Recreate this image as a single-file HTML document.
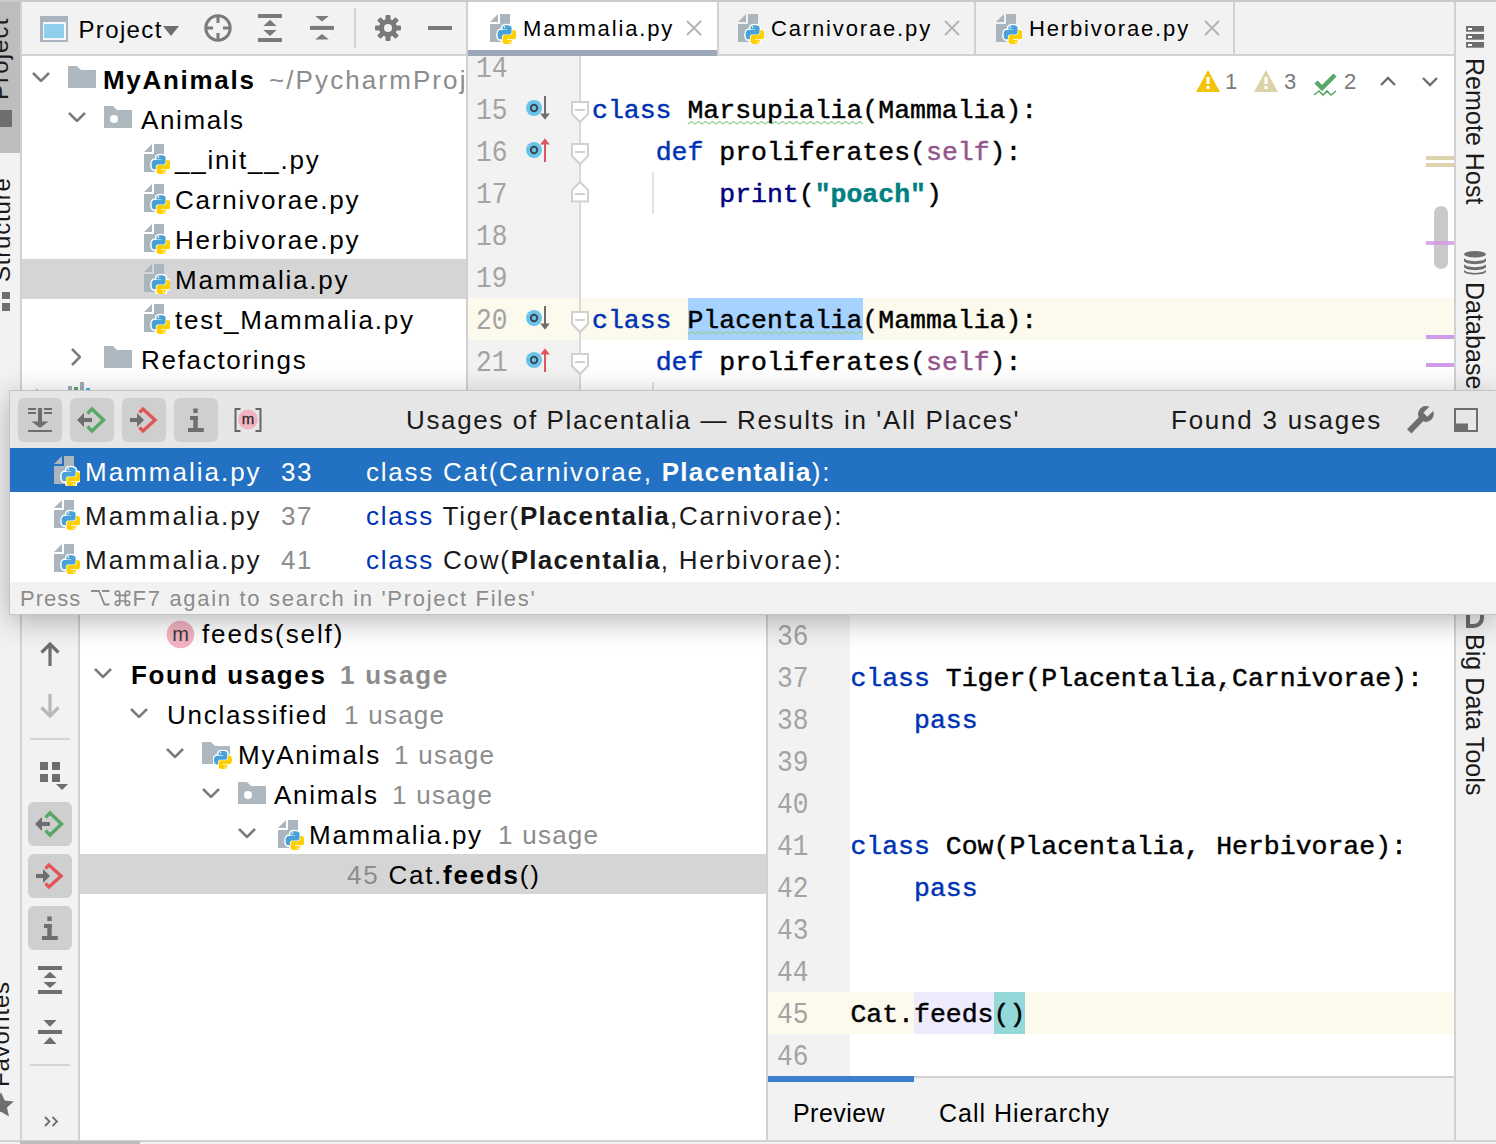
<!DOCTYPE html>
<html><head><meta charset="utf-8">
<style>
*{margin:0;padding:0;box-sizing:border-box}
html,body{width:1496px;height:1144px;overflow:hidden}
body{position:relative;background:#f2f2f2;font-family:"Liberation Sans",sans-serif;color:#000}
.a{position:absolute}
.t{position:absolute;white-space:pre;font-size:26px;letter-spacing:1.6px;line-height:40px;height:40px}
.c{position:absolute;white-space:pre;font-family:"Liberation Mono",monospace;font-size:26.5px;line-height:42px;height:42px;-webkit-text-stroke:0.45px currentColor}
.ln{position:absolute;white-space:pre;font-family:"Liberation Mono",monospace;font-size:28.7px;line-height:42px;height:42px;color:#a3a3a3;text-align:right;transform:scaleX(0.914);transform-origin:100% 50%}
.g{color:#8c8c8c}
.kw{color:#0033b3}
.bi{color:#000080}
.st{color:#008080;font-weight:bold}
.sf{color:#94558d}
svg{position:absolute;overflow:visible}
</style></head>
<body>
<svg width="0" height="0" style="position:absolute"><defs>
<symbol id="py" viewBox="0 0 26 30"><path d="M0 8L8 0V8Z" fill="#aab5be"/><path d="M10 0H20V28H0V10H10Z" fill="#aab5be"/><g transform="translate(7.6 11.2) scale(0.19)"><path d="M49.5 0C24 0 25.6 11 25.6 11L25.7 22.4H50V25.8H16C16 25.8 0 24 0 49.7C0 75.4 14.1 74.5 14.1 74.5H22.5V62.6C22.5 62.6 22 48.5 36.3 48.5H60.2C60.2 48.5 73.6 48.7 73.6 35.5V13.7C73.6 13.7 75.6 0 49.5 0Z" fill="#fff" stroke="#fff" stroke-width="16" stroke-linejoin="round"/><path d="M50.2 100C75.7 100 74.1 89 74.1 89L74 77.6H49.7V74.2H83.7C83.7 74.2 99.7 76 99.7 50.3C99.7 24.6 85.6 25.5 85.6 25.5H77.2V37.4C77.2 37.4 77.7 51.5 63.4 51.5H39.5C39.5 51.5 26.1 51.3 26.1 64.5V86.3C26.1 86.3 24.1 100 50.2 100Z" fill="#fff" stroke="#fff" stroke-width="16" stroke-linejoin="round"/><path d="M49.5 0C24 0 25.6 11 25.6 11L25.7 22.4H50V25.8H16C16 25.8 0 24 0 49.7C0 75.4 14.1 74.5 14.1 74.5H22.5V62.6C22.5 62.6 22 48.5 36.3 48.5H60.2C60.2 48.5 73.6 48.7 73.6 35.5V13.7C73.6 13.7 75.6 0 49.5 0Z" fill="#48a2d8"/><path d="M50.2 100C75.7 100 74.1 89 74.1 89L74 77.6H49.7V74.2H83.7C83.7 74.2 99.7 76 99.7 50.3C99.7 24.6 85.6 25.5 85.6 25.5H77.2V37.4C77.2 37.4 77.7 51.5 63.4 51.5H39.5C39.5 51.5 26.1 51.3 26.1 64.5V86.3C26.1 86.3 24.1 100 50.2 100Z" fill="#ffd000"/><circle cx="36" cy="10" r="4.5" fill="#fff"/><circle cx="64" cy="90" r="4.5" fill="#fff"/></g></symbol>
<symbol id="pylogo" viewBox="0 0 20 20"><g transform="translate(1 1) scale(0.18)"><path d="M49.5 0C24 0 25.6 11 25.6 11L25.7 22.4H50V25.8H16C16 25.8 0 24 0 49.7C0 75.4 14.1 74.5 14.1 74.5H22.5V62.6C22.5 62.6 22 48.5 36.3 48.5H60.2C60.2 48.5 73.6 48.7 73.6 35.5V13.7C73.6 13.7 75.6 0 49.5 0Z" fill="#fff" stroke="#fff" stroke-width="16" stroke-linejoin="round"/><path d="M50.2 100C75.7 100 74.1 89 74.1 89L74 77.6H49.7V74.2H83.7C83.7 74.2 99.7 76 99.7 50.3C99.7 24.6 85.6 25.5 85.6 25.5H77.2V37.4C77.2 37.4 77.7 51.5 63.4 51.5H39.5C39.5 51.5 26.1 51.3 26.1 64.5V86.3C26.1 86.3 24.1 100 50.2 100Z" fill="#fff" stroke="#fff" stroke-width="16" stroke-linejoin="round"/><path d="M49.5 0C24 0 25.6 11 25.6 11L25.7 22.4H50V25.8H16C16 25.8 0 24 0 49.7C0 75.4 14.1 74.5 14.1 74.5H22.5V62.6C22.5 62.6 22 48.5 36.3 48.5H60.2C60.2 48.5 73.6 48.7 73.6 35.5V13.7C73.6 13.7 75.6 0 49.5 0Z" fill="#48a2d8"/><path d="M50.2 100C75.7 100 74.1 89 74.1 89L74 77.6H49.7V74.2H83.7C83.7 74.2 99.7 76 99.7 50.3C99.7 24.6 85.6 25.5 85.6 25.5H77.2V37.4C77.2 37.4 77.7 51.5 63.4 51.5H39.5C39.5 51.5 26.1 51.3 26.1 64.5V86.3C26.1 86.3 24.1 100 50.2 100Z" fill="#ffd000"/><circle cx="36" cy="10" r="4.5" fill="#fff"/><circle cx="64" cy="90" r="4.5" fill="#fff"/></g></symbol>
<symbol id="fold" viewBox="0 0 28 22"><path d="M0 0H9L13 4H28V22H0Z" fill="#adb8c1"/></symbol>
<symbol id="modf" viewBox="0 0 28 22"><path d="M0 0H9L13 4H28V22H0Z" fill="#adb8c1"/><circle cx="10" cy="13" r="4" fill="#fff"/></symbol>
<symbol id="chd" viewBox="0 0 18 10"><path d="M1 1L9 9L17 1" fill="none" stroke="#7b7b7b" stroke-width="2.5"/></symbol>
<symbol id="chr" viewBox="0 0 10 18"><path d="M1 1L9 9L1 17" fill="none" stroke="#7b7b7b" stroke-width="2.5"/></symbol>
</defs></svg>
<div class="a" style="left:0;top:0;width:1496px;height:1144px;clip-path:inset(0px 1476px 0px 0px)">
<div class="a" style="left:0px;top:0px;width:20px;height:1144px;background:#f2f2f2;"></div>
<div class="a" style="left:0px;top:0px;width:20px;height:153px;background:#bdbdbd;"></div>
<div class="a" style="left:-12px;top:99.5px;width:200px;height:24px;font-size:24px;line-height:24px;letter-spacing:1.1px;white-space:pre;transform:rotate(-90deg);transform-origin:0 0;color:#1a1a1a">Project</div>
<div class="a" style="left:0px;top:110px;width:12px;height:17px;background:#6e6e6e;"></div>
<div class="a" style="left:-10.5px;top:282px;width:200px;height:24px;font-size:24px;line-height:24px;letter-spacing:0.8px;white-space:pre;transform:rotate(-90deg);transform-origin:0 0;color:#1a1a1a">Structure</div>
<div class="a" style="left:2px;top:292px;width:8px;height:7px;background:#6e6e6e;"></div>
<div class="a" style="left:2px;top:303px;width:8px;height:8px;background:#6e6e6e;"></div>
<div class="a" style="left:-11.5px;top:1086.5px;width:200px;height:24px;font-size:24px;line-height:24px;letter-spacing:0.8px;white-space:pre;transform:rotate(-90deg);transform-origin:0 0;color:#1a1a1a">Favorites</div>
<svg style="left:-13px;top:1091px" width="28" height="28" viewBox="0 0 24 24"><path d="M12 1l3.2 7.2 7.8.7-5.9 5.2 1.8 7.7L12 17.8 5.1 21.8l1.8-7.7L1 8.9l7.8-.7z" fill="#6e6e6e"/></svg>
</div>
<div class="a" style="left:20px;top:0px;width:2px;height:1144px;background:#d1d1d1;"></div>
<div class="a" style="left:0;top:0;width:1496px;height:1144px;clip-path:inset(2px 1030px 753px 22px)">
<div class="a" style="left:22px;top:2px;width:444px;height:389px;background:#fff;"></div>
<div class="a" style="left:22px;top:2px;width:444px;height:52px;background:#f2f2f2;"></div>
<div class="a" style="left:22px;top:54px;width:444px;height:2px;background:#d1d1d1;"></div>
<div class="a" style="left:40px;top:16px;width:28px;height:26px;background:#aab4be;"></div>
<div class="a" style="left:42.5px;top:22px;width:23px;height:18px;background:#f4f6f8;"></div>
<div class="a" style="left:44px;top:23.5px;width:20px;height:14.5px;background:#8fcfec;"></div>
<div class="t" style="left:78.5px;top:10px;font-size:24px;letter-spacing:1.35px">Project</div>
<svg style="left:163px;top:26px" width="16" height="10" viewBox="0 0 16 10"><path d="M0 0H16L8 10Z" fill="#6e6e6e"/></svg>
<svg style="left:204px;top:14px" width="28" height="28" viewBox="0 0 28 28"><circle cx="14" cy="14" r="12.2" fill="none" stroke="#7a7a7a" stroke-width="3"/><path d="M14 2v7M14 19v7M2 14h7M19 14h7" stroke="#7a7a7a" stroke-width="3"/></svg>
<svg style="left:258px;top:14px" width="24" height="28" viewBox="0 0 24 28"><path d="M0 2h24M0 26h24" stroke="#7a7a7a" stroke-width="4"/><path d="M12 5.8L18.6 11.9H5.4ZM12 22L18.6 15.9H5.4Z" fill="#7a7a7a"/></svg>
<svg style="left:310px;top:16px" width="24" height="24" viewBox="0 0 24 24"><path d="M0 11.9h24" stroke="#7a7a7a" stroke-width="4"/><path d="M12 5.6L18.8 0H5.2ZM12 18L18.8 23.6H5.2Z" fill="#7a7a7a"/></svg>
<div class="a" style="left:354px;top:8px;width:2px;height:40px;background:#d4d4d4;"></div>
<svg style="left:375px;top:15px" width="26" height="26" viewBox="0 0 26 26"><g fill="#7a7a7a"><circle cx="13" cy="13" r="9"/><rect x="10.5" y="0" width="5" height="26" rx="1"/><rect x="10.5" y="0" width="5" height="26" rx="1" transform="rotate(45 13 13)"/><rect x="10.5" y="0" width="5" height="26" rx="1" transform="rotate(90 13 13)"/><rect x="10.5" y="0" width="5" height="26" rx="1" transform="rotate(135 13 13)"/></g><circle cx="13" cy="13" r="4" fill="#f2f2f2"/></svg>
<div class="a" style="left:428px;top:26px;width:24px;height:4px;background:#7a7a7a;"></div>
<div class="a" style="left:22px;top:259px;width:444px;height:40px;background:#d5d5d5;"></div>
<svg style="left:32px;top:71.5px" width="18" height="10"><use href="#chd"/></svg>
<svg style="left:68px;top:66px" width="28" height="22"><use href="#fold"/></svg>
<div class="t" style="left:103px;top:59.5px;font-weight:bold;letter-spacing:1.7px">MyAnimals</div>
<div class="t" style="left:269px;top:59.5px;color:#8c8c8c;letter-spacing:2.1px">~/PycharmProjects/MyAnimals</div>
<svg style="left:68px;top:111.5px" width="18" height="10"><use href="#chd"/></svg>
<svg style="left:104px;top:106px" width="28" height="22"><use href="#modf"/></svg>
<div class="t" style="left:141px;top:99.5px;">Animals</div>
<svg style="left:144px;top:144px" width="26" height="30"><use href="#py"/></svg>
<div class="t" style="left:175px;top:139.5px;letter-spacing:1.8px">__init__.py</div>
<svg style="left:144px;top:184px" width="26" height="30"><use href="#py"/></svg>
<div class="t" style="left:175px;top:179.5px;letter-spacing:1.8px">Carnivorae.py</div>
<svg style="left:144px;top:224px" width="26" height="30"><use href="#py"/></svg>
<div class="t" style="left:175px;top:219.5px;letter-spacing:1.8px">Herbivorae.py</div>
<svg style="left:144px;top:264px" width="26" height="30"><use href="#py"/></svg>
<div class="t" style="left:175px;top:259.5px;letter-spacing:1.8px">Mammalia.py</div>
<svg style="left:144px;top:304px" width="26" height="30"><use href="#py"/></svg>
<div class="t" style="left:175px;top:299.5px;letter-spacing:1.8px">test_Mammalia.py</div>
<svg style="left:71px;top:348px" width="10" height="18"><use href="#chr"/></svg>
<svg style="left:104px;top:346px" width="28" height="22"><use href="#fold"/></svg>
<div class="t" style="left:141px;top:339.5px;letter-spacing:1.7px">Refactorings</div>
<svg style="left:35px;top:389px" width="10" height="18"><use href="#chr"/></svg>
<div class="a" style="left:68px;top:386px;width:4px;height:20px;background:#a4aeb8;"></div>
<div class="a" style="left:74px;top:387px;width:4px;height:19px;background:#59a869;"></div>
<div class="a" style="left:80px;top:382px;width:4px;height:24px;background:#a4aeb8;"></div>
<div class="a" style="left:86px;top:388px;width:4px;height:18px;background:#40b6e0;"></div>
<div class="t" style="left:105px;top:379.5px;">External Libraries</div>
</div>
<div class="a" style="left:466px;top:2px;width:2px;height:389px;background:#d1d1d1;"></div>
<div class="a" style="left:0;top:0;width:1496px;height:1144px;clip-path:inset(2px 42px 753px 468px)">
<div class="a" style="left:468px;top:2px;width:986px;height:389px;background:#fff;"></div>
<div class="a" style="left:468px;top:2px;width:986px;height:52px;background:#f2f2f2;"></div>
<div class="a" style="left:468px;top:54px;width:986px;height:2px;background:#d1d1d1;"></div>
<div class="a" style="left:468px;top:2px;width:249px;height:48px;background:#fff;"></div>
<div class="a" style="left:468px;top:50px;width:249px;height:6px;background:#9ca7b8;"></div>
<div class="a" style="left:717px;top:2px;width:2px;height:52px;background:#d1d1d1;"></div>
<div class="a" style="left:974px;top:2px;width:2px;height:52px;background:#d1d1d1;"></div>
<div class="a" style="left:1233px;top:2px;width:2px;height:52px;background:#d1d1d1;"></div>
<svg style="left:490px;top:14px" width="26" height="30"><use href="#py"/></svg>
<div class="a" style="left:523px;top:3px;height:52px;line-height:52px;font-size:22px;letter-spacing:1.85px;white-space:pre">Mammalia.py</div>
<svg style="left:686px;top:20px" width="16" height="16" viewBox="0 0 16 16"><path d="M1 1L15 15M15 1L1 15" stroke="#b4b4b4" stroke-width="2"/></svg>
<svg style="left:738px;top:14px" width="26" height="30"><use href="#py"/></svg>
<div class="a" style="left:771px;top:3px;height:52px;line-height:52px;font-size:22px;letter-spacing:1.85px;white-space:pre">Carnivorae.py</div>
<svg style="left:944px;top:20px" width="16" height="16" viewBox="0 0 16 16"><path d="M1 1L15 15M15 1L1 15" stroke="#b4b4b4" stroke-width="2"/></svg>
<svg style="left:996px;top:14px" width="26" height="30"><use href="#py"/></svg>
<div class="a" style="left:1029px;top:3px;height:52px;line-height:52px;font-size:22px;letter-spacing:1.85px;white-space:pre">Herbivorae.py</div>
<svg style="left:1204px;top:20px" width="16" height="16" viewBox="0 0 16 16"><path d="M1 1L15 15M15 1L1 15" stroke="#b4b4b4" stroke-width="2"/></svg>
<div class="a" style="left:468px;top:56px;width:112px;height:335px;background:#f2f2f2;"></div>
<div class="a" style="left:468px;top:298px;width:986px;height:42px;background:#fcfaed;"></div>
<div class="a" style="left:579px;top:56px;width:2px;height:335px;background:#d9d9d9;"></div>
<div class="ln" style="left:468px;width:39.5px;top:48.5px">14</div>
<div class="ln" style="left:468px;width:39.5px;top:90.5px">15</div>
<div class="ln" style="left:468px;width:39.5px;top:132.5px">16</div>
<div class="ln" style="left:468px;width:39.5px;top:174.5px">17</div>
<div class="ln" style="left:468px;width:39.5px;top:216.5px">18</div>
<div class="ln" style="left:468px;width:39.5px;top:258.5px">19</div>
<div class="ln" style="left:468px;width:39.5px;top:300.5px">20</div>
<div class="ln" style="left:468px;width:39.5px;top:342.5px">21</div>
<div class="ln" style="left:468px;width:39.5px;top:384.5px">22</div>
<svg style="left:526px;top:108px" width="1" height="1"><circle cx="8" cy="0" r="8" fill="#6ac3e8"/><circle cx="8" cy="0" r="3.2" fill="none" stroke="#3b4a52" stroke-width="2"/><path d="M19 -12V6" stroke="#6e6e6e" stroke-width="2"/><path d="M14.2 5.5L19 11.8L23.8 5.5Z" fill="#6e6e6e"/></svg>
<svg style="left:526px;top:150px" width="1" height="1"><circle cx="8" cy="0" r="8" fill="#6ac3e8"/><circle cx="8" cy="0" r="3.2" fill="none" stroke="#3b4a52" stroke-width="2"/><path d="M19 12V-6" stroke="#db5860" stroke-width="2"/><path d="M14.2 -5.5L19 -11.8L23.8 -5.5Z" fill="#db5860"/></svg>
<svg style="left:526px;top:318px" width="1" height="1"><circle cx="8" cy="0" r="8" fill="#6ac3e8"/><circle cx="8" cy="0" r="3.2" fill="none" stroke="#3b4a52" stroke-width="2"/><path d="M19 -12V6" stroke="#6e6e6e" stroke-width="2"/><path d="M14.2 5.5L19 11.8L23.8 5.5Z" fill="#6e6e6e"/></svg>
<svg style="left:526px;top:360px" width="1" height="1"><circle cx="8" cy="0" r="8" fill="#6ac3e8"/><circle cx="8" cy="0" r="3.2" fill="none" stroke="#3b4a52" stroke-width="2"/><path d="M19 12V-6" stroke="#db5860" stroke-width="2"/><path d="M14.2 -5.5L19 -11.8L23.8 -5.5Z" fill="#db5860"/></svg>
<svg style="left:580px;top:109px" width="1" height="1"><path d="M-8 -7H8V5L0 13L-8 5Z" fill="#fff" stroke="#d0d0d0" stroke-width="2"/><path d="M-5 1H5" stroke="#d0d0d0" stroke-width="2"/></svg>
<svg style="left:580px;top:151px" width="1" height="1"><path d="M-8 -7H8V5L0 13L-8 5Z" fill="#fff" stroke="#d0d0d0" stroke-width="2"/><path d="M-5 1H5" stroke="#d0d0d0" stroke-width="2"/></svg>
<svg style="left:580px;top:193px" width="1" height="1"><path d="M-8 8.4H8V-3L0 -11L-8 -3Z" fill="#fff" stroke="#d0d0d0" stroke-width="2"/><path d="M-5 1H5" stroke="#d0d0d0" stroke-width="2"/></svg>
<svg style="left:580px;top:319px" width="1" height="1"><path d="M-8 -7H8V5L0 13L-8 5Z" fill="#fff" stroke="#d0d0d0" stroke-width="2"/><path d="M-5 1H5" stroke="#d0d0d0" stroke-width="2"/></svg>
<svg style="left:580px;top:361px" width="1" height="1"><path d="M-8 -7H8V5L0 13L-8 5Z" fill="#fff" stroke="#d0d0d0" stroke-width="2"/><path d="M-5 1H5" stroke="#d0d0d0" stroke-width="2"/></svg>
<svg style="left:580px;top:403px" width="1" height="1"><path d="M-8 8.4H8V-3L0 -11L-8 -3Z" fill="#fff" stroke="#d0d0d0" stroke-width="2"/><path d="M-5 1H5" stroke="#d0d0d0" stroke-width="2"/></svg>
<div class="a" style="left:652px;top:172px;width:2px;height:42px;background:#e3e3e3;"></div>
<div class="a" style="left:652px;top:382px;width:2px;height:20px;background:#e3e3e3;"></div>
<div class="a" style="left:687.9px;top:298px;width:174.9px;height:42px;background:#a6d2ff;"></div>
<svg style="left:687.9px;top:121px" width="174" height="4" viewBox="0 0 174 4"><path d="M0 3 L3.5 0.5 L7.0 3 L10.5 0.5 L14.0 3 L17.5 0.5 L21.0 3 L24.5 0.5 L28.0 3 L31.5 0.5 L35.0 3 L38.5 0.5 L42.0 3 L45.5 0.5 L49.0 3 L52.5 0.5 L56.0 3 L59.5 0.5 L63.0 3 L66.5 0.5 L70.0 3 L73.5 0.5 L77.0 3 L80.5 0.5 L84.0 3 L87.5 0.5 L91.0 3 L94.5 0.5 L98.0 3 L101.5 0.5 L105.0 3 L108.5 0.5 L112.0 3 L115.5 0.5 L119.0 3 L122.5 0.5 L126.0 3 L129.5 0.5 L133.0 3 L136.5 0.5 L140.0 3 L143.5 0.5 L147.0 3 L150.5 0.5 L154.0 3 L157.5 0.5 L161.0 3 L164.5 0.5 L168.0 3 L171.5 0.5 L175.0 3" fill="none" stroke="#9dcf9d" stroke-width="1.3"/></svg>
<svg style="left:687.9px;top:331px" width="174" height="4" viewBox="0 0 174 4"><path d="M0 3 L3.5 0.5 L7.0 3 L10.5 0.5 L14.0 3 L17.5 0.5 L21.0 3 L24.5 0.5 L28.0 3 L31.5 0.5 L35.0 3 L38.5 0.5 L42.0 3 L45.5 0.5 L49.0 3 L52.5 0.5 L56.0 3 L59.5 0.5 L63.0 3 L66.5 0.5 L70.0 3 L73.5 0.5 L77.0 3 L80.5 0.5 L84.0 3 L87.5 0.5 L91.0 3 L94.5 0.5 L98.0 3 L101.5 0.5 L105.0 3 L108.5 0.5 L112.0 3 L115.5 0.5 L119.0 3 L122.5 0.5 L126.0 3 L129.5 0.5 L133.0 3 L136.5 0.5 L140.0 3 L143.5 0.5 L147.0 3 L150.5 0.5 L154.0 3 L157.5 0.5 L161.0 3 L164.5 0.5 L168.0 3 L171.5 0.5 L175.0 3" fill="none" stroke="#9dcf9d" stroke-width="1.3"/></svg>
<div class="c" style="left:592.0px;top:90px;"><span class="kw">class</span> Marsupialia(Mammalia):</div>
<div class="c" style="left:592.0px;top:132px;">    <span class="kw">def</span> proliferates(<span class="sf">self</span>):</div>
<div class="c" style="left:592.0px;top:174px;">        <span class="bi">print</span>(<span class="st">"poach"</span>)</div>
<div class="c" style="left:592.0px;top:300px;"><span class="kw">class</span> Placentalia(Mammalia):</div>
<div class="c" style="left:592.0px;top:342px;">    <span class="kw">def</span> proliferates(<span class="sf">self</span>):</div>
<div class="c" style="left:592.0px;top:384px;">        <span class="bi">print</span>(<span class="st">"placenta"</span>)</div>
<svg style="left:1196px;top:70px" width="24" height="22" viewBox="0 0 24 22"><path d="M12 0L24 22H0Z" fill="#f2c40e"/><rect x="10.5" y="7" width="3" height="7" fill="#fff"/><rect x="10.5" y="16" width="3" height="3" fill="#fff"/></svg>
<div class="a" style="left:1225px;top:62px;height:40px;line-height:40px;font-size:22px;color:#7a7a7a">1</div>
<svg style="left:1254px;top:70px" width="24" height="22" viewBox="0 0 24 22"><path d="M12 0L24 22H0Z" fill="#dcd3aa"/><rect x="10.5" y="7" width="3" height="7" fill="#fff"/><rect x="10.5" y="16" width="3" height="3" fill="#fff"/></svg>
<div class="a" style="left:1284px;top:62px;height:40px;line-height:40px;font-size:22px;color:#7a7a7a">3</div>
<svg style="left:1314px;top:72px" width="24" height="24" viewBox="0 0 24 24"><path d="M2 10L8 16L21 3" fill="none" stroke="#59a869" stroke-width="4.5"/><path d="M0 23L5 19L9 23L13 19L17 23L22 19" fill="none" stroke="#59a869" stroke-width="1.6"/></svg>
<div class="a" style="left:1344px;top:62px;height:40px;line-height:40px;font-size:22px;color:#7a7a7a">2</div>
<svg style="left:1380px;top:76px" width="16" height="10" viewBox="0 0 16 10"><path d="M1 9L8 2L15 9" fill="none" stroke="#6e6e6e" stroke-width="2.4"/></svg>
<svg style="left:1422px;top:77px" width="16" height="10" viewBox="0 0 16 10"><path d="M1 1L8 8L15 1" fill="none" stroke="#6e6e6e" stroke-width="2.4"/></svg>
<div class="a" style="left:1426px;top:156px;width:28px;height:4px;background:#ddd3ae;"></div>
<div class="a" style="left:1426px;top:163px;width:28px;height:4px;background:#ddd3ae;"></div>
<div class="a" style="left:1434px;top:206px;width:14px;height:63px;background:#c9c9c9;border-radius:7px"></div>
<div class="a" style="left:1426px;top:241px;width:28px;height:4px;background:#cf9bea;opacity:0.85"></div>
<div class="a" style="left:1426px;top:335px;width:28px;height:4px;background:#cf9bea;"></div>
<div class="a" style="left:1426px;top:363px;width:28px;height:4px;background:#cf9bea;"></div>
</div>
<div class="a" style="left:1454px;top:2px;width:2px;height:1142px;background:#d1d1d1;"></div>
<div class="a" style="left:0;top:0;width:1496px;height:1144px;clip-path:inset(2px 0px 0px 1456px)">
<div class="a" style="left:1456px;top:2px;width:40px;height:1142px;background:#f2f2f2;"></div>
<svg style="left:1466px;top:26px" width="18" height="22" viewBox="0 0 18 22"><g fill="#6e6e6e"><rect x="0" y="0" width="18" height="5.7"/><rect x="0" y="8" width="18" height="5.7"/><rect x="0" y="16" width="18" height="5.7"/></g><g fill="#fff"><rect x="2" y="2" width="4" height="2"/><rect x="2" y="10" width="4" height="2"/><rect x="2" y="18" width="4" height="2"/></g></svg>
<div class="a" style="left:1487px;top:58px;width:220px;height:25px;font-size:25px;line-height:25px;letter-spacing:0.05px;white-space:pre;transform:rotate(90deg);transform-origin:0 0;color:#1a1a1a">Remote Host</div>
<svg style="left:1464px;top:250.5px" width="22" height="24" viewBox="0 0 22 24"><g fill="#6e6e6e"><ellipse cx="11" cy="3.2" rx="11" ry="3.2"/><path d="M0 6.8C0 8.6 4.9 10.2 11 10.2S22 8.6 22 6.8V9.8C22 11.6 17.1 13.2 11 13.2S0 11.6 0 9.8Z"/><path d="M0 12.8C0 14.6 4.9 16.2 11 16.2S22 14.6 22 12.8V15.8C22 17.6 17.1 19.2 11 19.2S0 17.6 0 15.8Z"/><path d="M0 18.6C0 20.4 4.9 22 11 22S22 20.4 22 18.6V20.6C22 22.4 17.1 23.6 11 23.6S0 22.4 0 20.6Z"/></g></svg>
<div class="a" style="left:1487px;top:282px;width:220px;height:25px;font-size:25px;line-height:25px;letter-spacing:0.05px;white-space:pre;transform:rotate(90deg);transform-origin:0 0;color:#1a1a1a">Database</div>
<div class="a" style="left:1466px;top:606px;width:18px;height:22px;background:transparent;border:4px solid #6e6e6e;border-radius:0 10px 10px 0"></div>
<div class="a" style="left:1487px;top:634px;width:220px;height:25px;font-size:25px;line-height:25px;letter-spacing:0.05px;white-space:pre;transform:rotate(90deg);transform-origin:0 0;color:#1a1a1a">Big Data Tools</div>
</div>
<div class="a" style="left:0;top:0;width:1496px;height:1144px;clip-path:inset(391px 42px 4px 22px)">
<div class="a" style="left:22px;top:391px;width:1432px;height:749px;background:#fff;"></div>
<div class="a" style="left:22px;top:391px;width:56px;height:749px;background:#f2f2f2;"></div>
<div class="a" style="left:78px;top:391px;width:2px;height:749px;background:#d1d1d1;"></div>
<div class="a" style="left:766px;top:391px;width:2px;height:749px;background:#d1d1d1;"></div>
<svg style="left:40px;top:642px" width="20" height="24" viewBox="0 0 20 24"><path d="M10 4V24" stroke="#6e6e6e" stroke-width="3.2"/><path d="M1.5 10.5L10 2L18.5 10.5" fill="none" stroke="#6e6e6e" stroke-width="3.2"/></svg>
<svg style="left:40px;top:694px" width="20" height="24" viewBox="0 0 20 24"><path d="M10 0V20" stroke="#b8b8b8" stroke-width="3.2"/><path d="M1.5 13.5L10 22L18.5 13.5" fill="none" stroke="#b8b8b8" stroke-width="3.2"/></svg>
<div class="a" style="left:30px;top:738px;width:40px;height:2px;background:#d4d4d4;"></div>
<svg style="left:40px;top:762px" width="28" height="28" viewBox="0 0 28 28"><g fill="#6e6e6e"><rect x="0" y="0" width="8" height="8"/><rect x="12" y="0" width="8" height="8"/><rect x="0" y="12" width="8" height="8"/><rect x="12" y="12" width="8" height="8"/><path d="M16 22H28L22 28Z"/></g></svg>
<div class="a" style="left:28px;top:802px;width:44px;height:44px;background:#cfcfcf;border-radius:6px"></div>
<svg style="left:28px;top:802px" width="44" height="44" viewBox="0 0 44 44"><path d="M12 22H22" stroke="#6e6e6e" stroke-width="4"/><path d="M7 22L14 15V29Z" fill="#6e6e6e"/><path d="M17.5 15.5L22 11L33.5 22L22 33L17.5 28.5" fill="none" stroke="#59a869" stroke-width="3.4"/></svg>
<div class="a" style="left:28px;top:854px;width:44px;height:44px;background:#cfcfcf;border-radius:6px"></div>
<svg style="left:28px;top:854px" width="44" height="44" viewBox="0 0 44 44"><path d="M8 22H16" stroke="#6e6e6e" stroke-width="4"/><path d="M22 22L15 15V29Z" fill="#6e6e6e"/><path d="M17.5 14.5L21 11L33 22L21 33L17.5 29.5" fill="none" stroke="#e05555" stroke-width="3.4"/></svg>
<div class="a" style="left:28px;top:906px;width:44px;height:44px;background:#cfcfcf;border-radius:6px"></div>
<svg style="left:28px;top:906px" width="44" height="44" viewBox="0 0 44 44"><g fill="#6e6e6e"><rect x="19.3" y="10.5" width="4.4" height="4.5"/><rect x="19.3" y="18" width="4.4" height="13"/><rect x="16" y="18" width="7.7" height="4"/><rect x="14" y="30" width="15.8" height="4"/></g></svg>
<svg style="left:38px;top:966px" width="24" height="28" viewBox="0 0 24 28"><path d="M0 2h24M0 26h24" stroke="#6e6e6e" stroke-width="4"/><path d="M12 5.8L18.6 11.9H5.4ZM12 22L18.6 15.9H5.4Z" fill="#6e6e6e"/></svg>
<svg style="left:38px;top:1020px" width="24" height="24" viewBox="0 0 24 24"><path d="M0 12h24" stroke="#6e6e6e" stroke-width="4"/><path d="M12 6.7L18.6 0H5.4ZM12 17L18.6 24H5.4Z" fill="#6e6e6e"/></svg>
<div class="a" style="left:30px;top:1064px;width:40px;height:2px;background:#d4d4d4;"></div>
<svg style="left:44px;top:1116px" width="15" height="11" viewBox="0 0 15 11"><path d="M1 1L5.5 5.5L1 10M8.5 1L13 5.5L8.5 10" fill="none" stroke="#6e6e6e" stroke-width="1.8"/></svg>
<div class="a" style="left:80px;top:854px;width:686px;height:40px;background:#d5d5d5;"></div>
<svg style="left:166.5px;top:620.5px" width="27" height="27" viewBox="0 0 27 27"><circle cx="13.5" cy="13.5" r="13.8" fill="#f4b3c2"/><text x="13.5" y="19.5" font-family="Liberation Sans" font-size="20" text-anchor="middle" fill="#3a3a3a">m</text></svg>
<div class="t" style="left:202px;top:614.4px;letter-spacing:1.9px">feeds(self)</div>
<svg style="left:94px;top:668px" width="18" height="10"><use href="#chd"/></svg>
<div class="t" style="left:131px;top:655.4px;font-weight:bold;letter-spacing:1.6px">Found usages</div>
<div class="t" style="left:340px;top:655.4px;font-weight:bold;color:#8c8c8c;letter-spacing:1.75px">1 usage</div>
<svg style="left:130px;top:708px" width="18" height="10"><use href="#chd"/></svg>
<div class="t" style="left:167px;top:695.4px;letter-spacing:1.75px">Unclassified</div>
<div class="t" style="left:344px;top:695.4px;color:#8c8c8c;letter-spacing:1.25px">1 usage</div>
<svg style="left:166px;top:748px" width="18" height="10"><use href="#chd"/></svg>
<svg style="left:202px;top:742px" width="28" height="22"><use href="#fold"/></svg>
<svg style="left:212.5px;top:750px" width="20" height="20" viewBox="0 0 20 20"><use href="#pylogo"/></svg>
<div class="t" style="left:238px;top:735.4px;letter-spacing:1.75px">MyAnimals</div>
<div class="t" style="left:394px;top:735.4px;color:#8c8c8c;letter-spacing:1.25px">1 usage</div>
<svg style="left:202px;top:788px" width="18" height="10"><use href="#chd"/></svg>
<svg style="left:238px;top:782px" width="28" height="22"><use href="#modf"/></svg>
<div class="t" style="left:274px;top:775.4px;letter-spacing:1.75px">Animals</div>
<div class="t" style="left:392px;top:775.4px;color:#8c8c8c;letter-spacing:1.25px">1 usage</div>
<svg style="left:238px;top:828px" width="18" height="10"><use href="#chd"/></svg>
<svg style="left:278px;top:820px" width="26" height="30"><use href="#py"/></svg>
<div class="t" style="left:309px;top:815.4px;letter-spacing:1.75px">Mammalia.py</div>
<div class="t" style="left:498px;top:815.4px;color:#8c8c8c;letter-spacing:1.25px">1 usage</div>
<div class="t" style="left:347px;top:855.4px;letter-spacing:1.75px"><span class="g">45</span> Cat.<b>feeds</b>()</div>
<div class="a" style="left:768px;top:614px;width:82px;height:462px;background:#f2f2f2;"></div>
<div class="a" style="left:768px;top:992px;width:686px;height:42px;background:#fcfaed;"></div>
<div class="ln" style="left:768px;width:40.5px;top:616.5px">36</div>
<div class="ln" style="left:768px;width:40.5px;top:658.5px">37</div>
<div class="ln" style="left:768px;width:40.5px;top:700.5px">38</div>
<div class="ln" style="left:768px;width:40.5px;top:742.5px">39</div>
<div class="ln" style="left:768px;width:40.5px;top:784.5px">40</div>
<div class="ln" style="left:768px;width:40.5px;top:826.5px">41</div>
<div class="ln" style="left:768px;width:40.5px;top:868.5px">42</div>
<div class="ln" style="left:768px;width:40.5px;top:910.5px">43</div>
<div class="ln" style="left:768px;width:40.5px;top:952.5px">44</div>
<div class="ln" style="left:768px;width:40.5px;top:994.5px">45</div>
<div class="ln" style="left:768px;width:40.5px;top:1036.5px">46</div>
<div class="a" style="left:914.0px;top:992px;width:79.5px;height:42px;background:#edebfc;"></div>
<div class="a" style="left:993.5px;top:992px;width:31.8px;height:42px;background:#93d9d9;"></div>
<div class="c" style="left:850.4px;top:658px;"><span class="kw">class</span> Tiger(Placentalia,Carnivorae):</div>
<div class="c" style="left:850.4px;top:700px;">    <span class="kw">pass</span></div>
<div class="c" style="left:850.4px;top:826px;"><span class="kw">class</span> Cow(Placentalia, Herbivorae):</div>
<div class="c" style="left:850.4px;top:868px;">    <span class="kw">pass</span></div>
<div class="c" style="left:850.4px;top:994px;">Cat.feeds()</div>
<svg style="left:1221px;top:685px" width="8" height="5" viewBox="0 0 8 5"><path d="M0.5 4.5L4 1L7.5 4.5" fill="none" stroke="#b8b8b8" stroke-width="1"/></svg>
<div class="a" style="left:768px;top:1076px;width:686px;height:64px;background:#f2f2f2;"></div>
<div class="a" style="left:768px;top:1076px;width:686px;height:2px;background:#d1d1d1;"></div>
<div class="a" style="left:768px;top:1076px;width:146px;height:6px;background:#3d7fcf;"></div>
<div class="a" style="left:793px;top:1083.5px;height:58px;line-height:58px;font-size:25px;letter-spacing:0.45px;white-space:pre">Preview</div>
<div class="a" style="left:939px;top:1083.5px;height:58px;line-height:58px;font-size:25px;letter-spacing:1.0px;white-space:pre">Call Hierarchy</div>
</div>
<div class="a" style="left:0px;top:1140px;width:1496px;height:2px;background:#d1d1d1;"></div>
<div class="a" style="left:0px;top:1142px;width:1496px;height:2px;background:#f2f2f2;"></div>
<div class="a" style="left:20px;top:1141px;width:120px;height:3px;background:#bdbdbd;"></div>
<div class="a" style="left:10px;top:391px;width:1486px;height:223px;background:#fff;box-shadow:0 0 0 1px #c4c4c4,0 6px 28px rgba(0,0,0,0.30)"></div>
<div class="a" style="left:0;top:0;width:1496px;height:1144px;clip-path:inset(391px 0px 530px 10px)">
<div class="a" style="left:10px;top:391px;width:1486px;height:57px;background:#e6e6e6;"></div>
<div class="a" style="left:18px;top:398px;width:44px;height:44px;background:#cfcfcf;border-radius:6px"></div>
<div class="a" style="left:70px;top:398px;width:44px;height:44px;background:#cfcfcf;border-radius:6px"></div>
<div class="a" style="left:122px;top:398px;width:44px;height:44px;background:#cfcfcf;border-radius:6px"></div>
<div class="a" style="left:174px;top:398px;width:44px;height:44px;background:#cfcfcf;border-radius:6px"></div>
<svg style="left:18px;top:398px" width="44" height="44" viewBox="0 0 44 44"><g fill="#6e6e6e"><rect x="10" y="10" width="8" height="2"/><rect x="10" y="14" width="8" height="2"/><rect x="26" y="10" width="8" height="2"/><rect x="26" y="14" width="8" height="2"/><rect x="20" y="10" width="4" height="14"/><path d="M13.5 23.5H30.5L22 30Z"/><rect x="10" y="32" width="24" height="2"/></g></svg>
<svg style="left:70px;top:398px" width="44" height="44" viewBox="0 0 44 44"><path d="M12 22H22" stroke="#6e6e6e" stroke-width="4"/><path d="M7 22L14 15V29Z" fill="#6e6e6e"/><path d="M17.5 15.5L22 11L33.5 22L22 33L17.5 28.5" fill="none" stroke="#59a869" stroke-width="3.4"/></svg>
<svg style="left:122px;top:398px" width="44" height="44" viewBox="0 0 44 44"><path d="M8 22H16" stroke="#6e6e6e" stroke-width="4"/><path d="M22 22L15 15V29Z" fill="#6e6e6e"/><path d="M17.5 14.5L21 11L33 22L21 33L17.5 29.5" fill="none" stroke="#e05555" stroke-width="3.4"/></svg>
<svg style="left:174px;top:398px" width="44" height="44" viewBox="0 0 44 44"><g fill="#6e6e6e"><rect x="19.3" y="10.5" width="4.4" height="4.5"/><rect x="19.3" y="18" width="4.4" height="13"/><rect x="16" y="18" width="7.7" height="4"/><rect x="14" y="30" width="15.8" height="4"/></g></svg>
<svg style="left:234px;top:408px" width="28" height="24" viewBox="0 0 28 24"><path d="M6.5 1H1.5V23H6.5M21.5 1H26.5V23H21.5" fill="none" stroke="#666" stroke-width="2"/><circle cx="14" cy="11.5" r="9.9" fill="#f4b3c2"/><text x="14" y="15.6" font-family="Liberation Sans" font-size="15" text-anchor="middle" fill="#2a2a2a" stroke="#2a2a2a" stroke-width="0.3">m</text></svg>
<div class="t" style="left:406px;top:400px;color:#1a1a1a;letter-spacing:1.63px">Usages of Placentalia — Results in 'All Places'</div>
<div class="t" style="left:1171px;top:400px;color:#1a1a1a;letter-spacing:1.75px">Found 3 usages</div>
<svg style="left:1406px;top:406px" width="30" height="28" viewBox="0 0 30 28"><g fill="#6e6e6e"><circle cx="19.9" cy="8" r="7.9"/><path d="M19.9 8L3.2 25.4" stroke="#6e6e6e" stroke-width="6"/></g><rect x="-2.85" y="-6" width="5.7" height="12" transform="translate(23.6 4.6) rotate(45)" fill="#e6e6e6"/></svg>
<svg style="left:1454px;top:408px" width="24" height="24" viewBox="0 0 24 24"><rect x="1" y="1" width="22" height="22" fill="none" stroke="#6e6e6e" stroke-width="2"/><rect x="0" y="15.5" width="14" height="8.5" fill="#6e6e6e"/></svg>
<div class="a" style="left:10px;top:448px;width:1486px;height:44px;background:#2371c3;"></div>
<svg style="left:54px;top:456px" width="26" height="30"><use href="#py"/></svg>
<div class="t" style="left:85px;top:451.5px;color:#fff;letter-spacing:2.0px">Mammalia.py</div>
<div class="t" style="left:240px;top:451.5px;width:73px;text-align:right;color:#fff;letter-spacing:1.6px">33</div>
<div class="t" style="left:366px;top:451.5px;color:#fff;letter-spacing:1.75px">class Cat(Carnivorae, <b style="letter-spacing:1.3px">Placentalia</b>):</div>
<svg style="left:54px;top:500px" width="26" height="30"><use href="#py"/></svg>
<div class="t" style="left:85px;top:495.5px;color:#1a1a1a;letter-spacing:2.0px">Mammalia.py</div>
<div class="t" style="left:240px;top:495.5px;width:73px;text-align:right;color:#8c8c8c;letter-spacing:1.6px">37</div>
<div class="t" style="left:366px;top:495.5px;color:#1a1a1a;letter-spacing:1.75px"><span class="kw">class</span> Tiger(<b style="letter-spacing:1.3px">Placentalia</b>,Carnivorae):</div>
<svg style="left:54px;top:544px" width="26" height="30"><use href="#py"/></svg>
<div class="t" style="left:85px;top:539.5px;color:#1a1a1a;letter-spacing:2.0px">Mammalia.py</div>
<div class="t" style="left:240px;top:539.5px;width:73px;text-align:right;color:#8c8c8c;letter-spacing:1.6px">41</div>
<div class="t" style="left:366px;top:539.5px;color:#1a1a1a;letter-spacing:1.75px"><span class="kw">class</span> Cow(<b style="letter-spacing:1.3px">Placentalia</b>, Herbivorae):</div>
<div class="a" style="left:10px;top:582px;width:1486px;height:32px;background:#f2f2f2;"></div>
<div class="a" style="left:20px;top:582px;height:34px;line-height:34px;font-size:22px;white-space:pre;color:#8c8c8c;letter-spacing:1.0px">Press</div>
<svg style="left:90.9px;top:590px" width="19" height="16" viewBox="0 0 19 16"><path d="M0 1H8L13.5 14.5H18.4M11 1H18.4" fill="none" stroke="#8c8c8c" stroke-width="1.8"/></svg>
<svg style="left:113.7px;top:590px" width="17" height="16" viewBox="0 0 17 16"><g transform="translate(0.5 0.2) scale(1.0)"><path d="M5.2 5.2H10.8V10.8H5.2Z M5.2 5.2V3A2.2 2.2 0 1 0 3 5.2H5.2 M10.8 5.2H13A2.2 2.2 0 1 0 10.8 3V5.2 M10.8 10.8V13A2.2 2.2 0 1 0 13 10.8H10.8 M5.2 10.8H3A2.2 2.2 0 1 0 5.2 13V10.8" fill="none" stroke="#8c8c8c" stroke-width="1.7"/></g></svg>
<div class="a" style="left:132.5px;top:582px;height:34px;line-height:34px;font-size:22px;white-space:pre;color:#8c8c8c;letter-spacing:1.7px">F7 again to search in 'Project Files'</div>
</div>
<div class="a" style="left:0px;top:0px;width:1496px;height:2px;background:#cacaca;"></div>
</body></html>
